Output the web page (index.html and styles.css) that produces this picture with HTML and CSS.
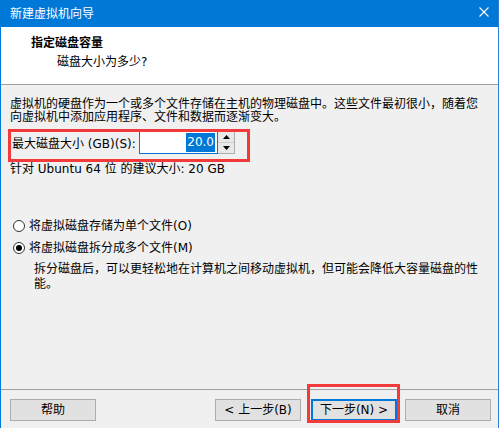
FILE: index.html
```html
<!DOCTYPE html>
<html lang="zh-CN">
<head>
<meta charset="utf-8">
<title>新建虚拟机向导</title>
<link rel="stylesheet" href="styles.css">
</head>
<body>
<div class="window">
  <div class="titlebar">
    <span class="title">新建虚拟机向导</span>
    <svg class="close" width="10" height="10" viewBox="0 0 10 10"><path d="M0.5 0.5 L9.5 9.5 M9.5 0.5 L0.5 9.5" stroke="#fff" stroke-width="1.1" fill="none"/></svg>
  </div>
  <div class="header">
    <div class="h-title">指定磁盘容量</div>
    <div class="h-sub">磁盘大小为多少?</div>
  </div>
  <div class="content">
    <p class="intro">虚拟机的硬盘作为一个或多个文件存储在主机的物理磁盘中。这些文件最初很小，随着您<br>向虚拟机中添加应用程序、文件和数据而逐渐变大。</p>
    <div class="size-row">
      <label class="size-label">最大磁盘大小 (GB)(S):</label>
      <div class="spin">
        <div class="spin-input"><span class="sel">20.0</span></div>
        <div class="spin-btns">
          <span class="spin-btn"><svg width="7" height="4" viewBox="0 0 7 4"><path d="M3.5 0 L7 4 L0 4 Z" fill="#000"/></svg></span>
          <span class="spin-btn"><svg width="7" height="4" viewBox="0 0 7 4"><path d="M0 0 L7 0 L3.5 4 Z" fill="#000"/></svg></span>
        </div>
      </div>
    </div>
    <p class="rec">针对 Ubuntu 64 位 的建议大小: 20 GB</p>
    <div class="options">
      <div class="radio-row"><span class="radio"></span>将虚拟磁盘存储为单个文件(O)</div>
      <div class="radio-row second"><span class="radio checked"></span>将虚拟磁盘拆分成多个文件(M)</div>
      <p class="desc">拆分磁盘后，可以更轻松地在计算机之间移动虚拟机，但可能会降低大容量磁盘的性<br>能。</p>
    </div>
  </div>
  <div class="footer">
    <button class="btn">帮助</button>
    <div class="nav">
      <button class="btn prev">&lt; 上一步(B)</button>
      <span class="highlight"><button class="btn default">下一步(N) &gt;</button></span>
      <button class="btn cancel">取消</button>
    </div>
  </div>
</div>
</body>
</html>
```

FILE: styles.css
```css
html, body {
  margin: 0;
  padding: 0;
  background: #ffffff;
}
body {
  font-family: "DejaVu Sans", "Noto Sans CJK SC", sans-serif;
  font-size: 12px;
  color: #000;
}
.window {
  width: 499px;
  height: 428px;
  box-sizing: border-box;
  border-left: 1px solid #0078d7;
  border-right: 1px solid #2f7fd6;
  display: flex;
  flex-direction: column;
  background: #f0f0f0;
}
.titlebar {
  height: 27px;
  flex: 0 0 27px;
  background: #0078d7;
  color: #fff;
  display: flex;
  align-items: center;
  justify-content: space-between;
  padding: 0 9px 0 9px;
  box-sizing: border-box;
  line-height: 14px;
}
.close {
  display: block;
  margin-top: -3px;
}
.header {
  flex: 0 0 58px;
  box-sizing: border-box;
  background: #fff;
  border-bottom: 1px solid #a0a0a0;
  padding: 9px 0 0 30px;
  line-height: 14px;
}
.h-title {
  font-weight: bold;
}
.h-sub {
  margin-top: 5px;
  padding-left: 26px;
}
.content {
  flex: 1;
  padding: 13px 9px 0 9px;
}
.intro {
  margin: 0;
  line-height: 13px;
  white-space: nowrap;
}
.size-row {
  position: relative;
  margin: 5px 0 0 -2px;
  width: 242px;
  height: 33px;
  box-sizing: border-box;
  padding: 2px 0 0 4px;
  display: flex;
  align-items: flex-start;
}
.size-row::after {
  content: "";
  position: absolute;
  inset: 0;
  border: 3px solid #f23a3a;
  pointer-events: none;
}
.size-label {
  flex: 0 0 127px;
  line-height: 23px;
  margin-top: 2px;
}
.spin {
  display: flex;
}
.spin-input {
  width: 79px;
  height: 23px;
  box-sizing: border-box;
  border: 1px solid #0078d7;
  background: #fff;
  display: flex;
  justify-content: flex-end;
  align-items: center;
  padding-right: 2px;
}
.sel {
  background: #0078d7;
  color: #fff;
  line-height: 19px;
  padding: 0 1px;
}
.spin-btns {
  width: 17px;
  height: 23px;
  box-sizing: border-box;
  border: 1px solid #adadad;
  border-left: none;
  display: flex;
  flex-direction: column;
  background: #e8e8e8;
}
.spin-btn {
  flex: 1;
  display: flex;
  align-items: center;
  justify-content: center;
}
.spin-btn:first-child {
  border-bottom: 1px solid #d0d0d0;
}
.spin-btn svg {
  display: block;
}
.rec {
  margin: 0;
  line-height: 14px;
}
.options {
  margin-top: 43px;
}
.radio-row {
  display: flex;
  align-items: center;
  height: 14px;
  line-height: 14px;
  padding-left: 3px;
}
.radio-row.second {
  margin-top: 8px;
}
.radio {
  width: 12px;
  height: 12px;
  box-sizing: border-box;
  border: 1px solid #333;
  border-radius: 50%;
  background: #fff;
  margin-right: 4px;
  display: flex;
  align-items: center;
  justify-content: center;
}
.radio.checked::before {
  content: "";
  width: 6px;
  height: 6px;
  border-radius: 50%;
  background: #000;
}
.desc {
  margin: 7px 0 0 0;
  padding-left: 24px;
  line-height: 15px;
  white-space: nowrap;
}
.footer {
  flex: 0 0 39px;
  box-sizing: border-box;
  border-top: 1px solid #a0a0a0;
  padding: 9px 7px 0 9px;
  display: flex;
  justify-content: space-between;
  align-items: flex-start;
}
.nav {
  display: flex;
  align-items: flex-start;
}
.btn {
  width: 86px;
  height: 22px;
  box-sizing: border-box;
  border: 1px solid #adadad;
  background: #e1e1e1;
  font-family: "DejaVu Sans", "Noto Sans CJK SC", sans-serif;
  font-size: 12px;
  line-height: 14px;
  color: #000;
  padding: 0;
  margin: 0;
  display: block;
}
.btn.prev {
  margin-right: 10px;
}
.btn.cancel {
  margin-left: 8px;
}
.btn.default {
  border: 2px solid #0078d7;
}
.highlight {
  position: relative;
  display: block;
}
.highlight::after {
  content: "";
  position: absolute;
  top: -15px;
  bottom: -2px;
  left: -4px;
  right: -3px;
  border: 3px solid #f23a3a;
  pointer-events: none;
}
```
